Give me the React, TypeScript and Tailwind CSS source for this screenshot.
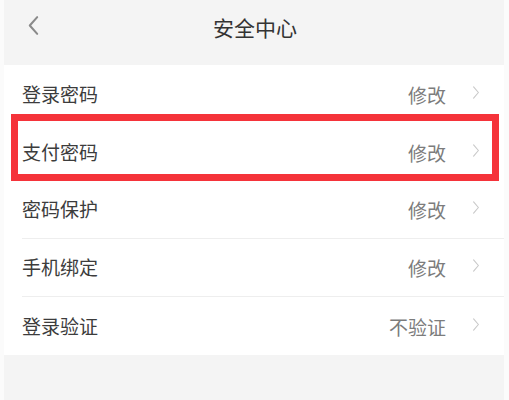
import React from "react";

const rows = [
  { label: "登录密码", value: "修改" },
  { label: "支付密码", value: "修改", marked: true },
  { label: "密码保护", value: "修改" },
  { label: "手机绑定", value: "修改" },
  { label: "登录验证", value: "不验证" },
];

const Chevron = ({ className }: { className?: string }) => (
  <svg viewBox="0 0 10 18" className={className} fill="none" stroke="currentColor" strokeWidth="1.4" strokeLinecap="round" strokeLinejoin="round">
    <path d="M2 2l6 7-6 7" />
  </svg>
);

export default function App() {
  return (
    <div
      className="w-[509px] h-[400px] bg-[#fbfbfb] pl-[4px] pr-[5px] overflow-hidden"
      style={{ fontFamily: '"Noto Sans CJK SC", "Noto Sans", sans-serif' }}
    >
      <div className="h-full bg-[#f4f4f4] flex flex-col">
        {/* header */}
        <div className="h-[65px] shrink-0 flex items-center relative">
          <svg viewBox="0 0 14 22" className="absolute left-[23px] top-[15px] w-[13px] h-[21px] text-[#8a8a8a]" fill="none" stroke="currentColor" strokeWidth="2.2" strokeLinecap="round" strokeLinejoin="round">
            <path d="M11 2L3 11l8 9" />
          </svg>
          <div className="flex-1 text-center text-[21px] text-[#333] pb-[10px] pl-[2px]">安全中心</div>
        </div>

        {/* list */}
        <div className="bg-white">
          {rows.map((r, i) => (
            <div key={r.label} className="relative h-[58px] pl-[18px]">
              <div className={`h-full flex items-center ${i < rows.length - 1 && !r.marked && !rows[i + 1]?.marked ? "border-b border-[#eeeeee]" : ""}`}>
                <span className="flex-1 text-[19px] text-[#3c3c3c]">{r.label}</span>
                <span className="text-[19px] text-[#7c7c7c] mr-[26px] pt-[2px]">{r.value}</span>
                <Chevron className="w-[8px] h-[15px] text-[#c9c9c9] -mt-[4px] mr-[24px]" />
              </div>
              {r.marked && (
                <div className="absolute left-[7px] right-[5px] -top-[9px] bottom-0 border-[7px] border-[#f5333a]" />
              )}
            </div>
          ))}
        </div>
      </div>
    </div>
  );
}
